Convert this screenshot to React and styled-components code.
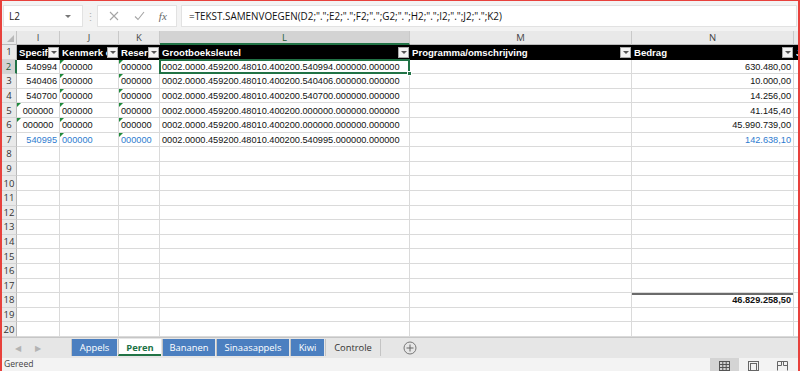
import React from 'react';
import styled, { createGlobalStyle, css } from 'styled-components';

const GlobalStyle = createGlobalStyle`
  html, body {
    margin: 0;
    padding: 0;
    overflow: hidden;
    background: #fff;
  }
  * {
    box-sizing: border-box;
  }
`;

const Frame = styled.div`
  width: 800px;
  height: 371px;
  border: 2px solid #e8413c;
  border-top-width: 1px;
  border-bottom: none;
  display: flex;
  flex-direction: column;
  overflow: hidden;
  font-family: "Open Sans", "Liberation Sans", sans-serif;
`;

/* ---------- formula bar ---------- */

const FormulaBar = styled.div`
  height: 30px;
  flex: none;
  display: flex;
  align-items: center;
  padding: 0 1px 0 1px;
  background: #f3f3f3;
`;

const NameBox = styled.div`
  width: 80px;
  height: 22px;
  background: #fff;
  border: 1px solid #e2e2e2;
  display: flex;
  align-items: center;
  justify-content: space-between;
  padding: 0 11px 0 5px;
  font-size: 10px;
  color: #222;
`;

const Caret = styled.span`
  width: 0;
  height: 0;
  border-left: 3px solid transparent;
  border-right: 3px solid transparent;
  border-top: 3px solid #777;
`;

const Grip = styled.div`
  width: 14px;
  display: flex;
  justify-content: center;
  color: #b5b5b5;
  font-size: 11px;
`;

const ButtonBox = styled.div`
  width: 80px;
  height: 22px;
  background: #fff;
  border: 1px solid #e2e2e2;
  display: flex;
  align-items: center;
  justify-content: space-around;
  padding: 0 2px 0 4px;
  color: #9a9a9a;
`;

const Fx = styled.span`
  font-family: "Liberation Serif", serif;
  font-style: italic;
  font-size: 11px;
  color: #666;
`;

const FormulaInput = styled.div`
  flex: 1;
  height: 22px;
  margin-left: 4px;
  background: #fff;
  border: 1px solid #e2e2e2;
  display: flex;
  align-items: center;
  padding-left: 7px;
  font-size: 9.9px;
  color: #111;
  white-space: nowrap;
  overflow: hidden;
`;

/* ---------- sheet ---------- */

const Sheet = styled.div`
  flex: none;
  display: grid;
  grid-template-columns: 15px 43px 59px 41px 250px 222px 162px 1fr;
  grid-template-rows: 14px repeat(20, 14.6px);
  font-family: "Liberation Sans", Arial, sans-serif;
`;

const Corner = styled.div`
  position: relative;
  background: #e9e9e9;
  border-right: 1px solid #c3c3c3;
  border-bottom: 1px solid #b9b9b9;
  &::after {
    content: '';
    position: absolute;
    right: 2px;
    bottom: 2px;
    border-left: 7px solid transparent;
    border-bottom: 7px solid #b8b8b8;
  }
`;

const ColHead = styled.div`
  background: ${(p) => (p.$active ? '#d3d3d3' : '#e9e9e9')};
  border-right: 1px solid #c9c9c9;
  border-bottom: ${(p) => (p.$active ? '2px solid #217346' : '1px solid #b9b9b9')};
  display: flex;
  align-items: center;
  justify-content: center;
  font-family: "Open Sans", sans-serif;
  font-size: 9.5px;
  color: ${(p) => (p.$active ? '#1d5e38' : '#444')};
`;

const RowHead = styled.div`
  background: ${(p) => (p.$active ? '#d3d3d3' : '#e9e9e9')};
  border-right: ${(p) => (p.$active ? '2px solid #217346' : '1px solid #b9b9b9')};
  border-bottom: 1px solid #d4d4d4;
  display: flex;
  align-items: center;
  justify-content: center;
  font-family: "Open Sans", sans-serif;
  font-size: 9.5px;
  color: ${(p) => (p.$active ? '#1d5e38' : '#333')};
  overflow: hidden;
`;

const HeadCell = styled.div`
  background: #000;
  color: #fff;
  font-weight: bold;
  font-size: 9.6px;
  display: flex;
  align-items: center;
  padding: 0 1px 0 2px;
  overflow: hidden;
`;

const HeadText = styled.span`
  flex: 1;
  min-width: 0;
  overflow: hidden;
  white-space: nowrap;
`;

const FilterButton = styled.span`
  flex: none;
  width: 11px;
  height: 11px;
  background: #f3f3f3;
  border: 1px solid #a9a9a9;
  display: flex;
  align-items: center;
  justify-content: center;
  &::after {
    content: '';
    border-left: 3px solid transparent;
    border-right: 3px solid transparent;
    border-top: 3px solid #555;
  }
`;

const Cell = styled.div`
  position: relative;
  border-right: 1px solid #dadada;
  border-bottom: 1px solid #dadada;
  display: flex;
  align-items: center;
  justify-content: ${(p) =>
    p.$align === 'right' ? 'flex-end' : p.$align === 'center' ? 'center' : 'flex-start'};
  padding: 1px 2px 0 2px;
  font-size: 9.2px;
  font-weight: ${(p) => (p.$bold ? 'bold' : 'normal')};
  color: ${(p) => (p.$blue ? '#2e7bcf' : '#111')};
  white-space: nowrap;
  overflow: visible;
  ${(p) =>
    p.$flag &&
    css`
      &::before {
        content: '';
        position: absolute;
        top: 0;
        left: 0;
        border-top: 4px solid #1f8a3c;
        border-right: 4px solid transparent;
      }
    `}
  ${(p) =>
    p.$total &&
    css`
      box-shadow: inset 0 2px 0 #6b6b6b;
    `}
  ${(p) =>
    p.$selected &&
    css`
      &::after {
        content: '';
        position: absolute;
        inset: -1px -1px -1px -1px;
        border: 2px solid #217346;
        pointer-events: none;
        z-index: 2;
      }
    `}
`;

const Handle = styled.span`
  position: absolute;
  right: -3px;
  bottom: -3px;
  width: 5px;
  height: 5px;
  background: #217346;
  border: 1px solid #fff;
  z-index: 3;
`;

/* ---------- tabs & status ---------- */

const TabBar = styled.div`
  height: 21px;
  flex: none;
  display: flex;
  align-items: center;
  background: #e6e6e6;
  border-top: 1px solid #c6c6c6;
`;

const Nav = styled.div`
  width: 69px;
  display: flex;
  padding-left: 13px;
  gap: 14px;
  color: #b3b3b3;
  font-size: 8px;
`;

const Tab = styled.div`
  flex: none;
  width: ${(p) => p.$w}px;
  height: 17px;
  margin-right: 1px;
  display: flex;
  align-items: center;
  justify-content: center;
  font-size: 9.4px;
  border-left: 1px solid #c4c4c4;
  white-space: nowrap;
  ${(p) =>
    p.$kind === 'blue' &&
    css`
      background: #4b7fc0;
      color: #fff;
    `}
  ${(p) =>
    p.$kind === 'active' &&
    css`
      background: #fff;
      color: #217346;
      font-weight: bold;
      border-bottom: 2px solid #217346;
      padding-top: 2px;
    `}
  ${(p) =>
    p.$kind === 'plain' &&
    css`
      color: #333;
      border-right: 1px solid #c4c4c4;
    `}
`;

const AddSheet = styled.div`
  margin-left: 21px;
  display: flex;
  align-items: center;
`;

const StatusBar = styled.div`
  flex: 1;
  display: flex;
  align-items: flex-start;
  justify-content: space-between;
  background: #f3f3f3;
  font-size: 8.6px;
  color: #444;
  padding-left: 2px;
  overflow: hidden;
`;

const Views = styled.div`
  display: flex;
  padding-right: 1px;
`;

const ViewButton = styled.div`
  width: 29px;
  height: 14px;
  display: flex;
  justify-content: center;
  padding-top: 3px;
  background: ${(p) => (p.$on ? '#d4d4d4' : 'transparent')};
`;

const KEY = '0002.0000.459200.48010.400200.';

const data = [
  { i: '540994', k: KEY + '540994.000000.000000', n: '630.480,00' },
  { i: '540406', k: KEY + '540406.000000.000000', n: '10.000,00' },
  { i: '540700', k: KEY + '540700.000000.000000', n: '14.256,00' },
  { i: '000000', text: true, k: KEY + '000000.000000.000000', n: '41.145,40' },
  { i: '000000', text: true, k: KEY + '000000.000000.000000', n: '45.990.739,00' },
  { i: '540995', blue: true, k: KEY + '540995.000000.000000', n: '142.638,10' },
];

const columns = ['I', 'J', 'K', 'L', 'M', 'N', ''];
const headers = ['Specificatie', 'Kenmerk code', 'Reservering', 'Grootboeksleutel', 'Programma/omschrijving', 'Bedrag'];

const tabs = [
  { name: 'Appels', kind: 'blue', w: 46 },
  { name: 'Peren', kind: 'active', w: 43 },
  { name: 'Bananen', kind: 'blue', w: 53 },
  { name: 'Sinaasappels', kind: 'blue', w: 73 },
  { name: 'Kiwi', kind: 'blue', w: 34 },
  { name: 'Controle', kind: 'plain', w: 56 },
];

const GridIcon = () => (
  <svg width="11" height="10" viewBox="0 0 11 10">
    <rect x="0.5" y="0.5" width="10" height="9" fill="none" stroke="#555" />
    <path d="M0.5 3.5H10.5M0.5 6.5H10.5M3.8 0.5V9.5M7.2 0.5V9.5" stroke="#555" />
  </svg>
);

const LayoutIcon = () => (
  <svg width="11" height="10" viewBox="0 0 11 10">
    <rect x="0.5" y="0.5" width="10" height="9" fill="none" stroke="#666" />
    <rect x="2.5" y="2.5" width="6" height="7" fill="none" stroke="#666" />
  </svg>
);

const BreakIcon = () => (
  <svg width="11" height="10" viewBox="0 0 11 10">
    <path d="M0.5 9.5V0.5H10.5V9.5M0.5 4.5H4.5V0.5M10.5 4.5H6.5V0.5" fill="none" stroke="#666" />
  </svg>
);

const App = () => {
  const body = [];
  for (let r = 2; r <= 20; r++) {
    const d = data[r - 2];
    body.push(
      <RowHead key={`h${r}`} $active={r === 2}>
        {r}
      </RowHead>
    );
    if (d) {
      body.push(
        <Cell key={`i${r}`} $align={d.text ? 'center' : 'right'} $flag={d.text} $blue={d.blue}>
          {d.i}
        </Cell>,
        <Cell key={`j${r}`} $flag $blue={d.blue}>000000</Cell>,
        <Cell key={`k${r}`} $flag $blue={d.blue}>000000</Cell>,
        <Cell key={`l${r}`} $selected={r === 2}>
          {d.k}
          {r === 2 && <Handle />}
        </Cell>,
        <Cell key={`m${r}`} />,
        <Cell key={`n${r}`} $align="right" $blue={d.blue}>{d.n}</Cell>,
        <Cell key={`x${r}`} />
      );
    } else {
      ['i', 'j', 'k', 'l', 'm'].forEach((c) => body.push(<Cell key={c + r} />));
      body.push(
        <Cell key={`n${r}`} $align="right" $bold={r === 18} $total={r === 18}>
          {r === 18 ? '46.829.258,50' : ''}
        </Cell>,
        <Cell key={`x${r}`} />
      );
    }
  }

  return (
    <>
      <GlobalStyle />
      <Frame>
        <FormulaBar>
          <NameBox>
            L2
            <Caret />
          </NameBox>
          <Grip>⋮</Grip>
          <ButtonBox>
            <svg width="10" height="10" viewBox="0 0 10 10">
              <path d="M1 1L9 9M9 1L1 9" stroke="#a5a5a5" strokeWidth="1.1" />
            </svg>
            <svg width="11" height="10" viewBox="0 0 11 10">
              <path d="M1 5.5L4 8.5L10 1" stroke="#a5a5a5" strokeWidth="1.1" fill="none" />
            </svg>
            <Fx>fx</Fx>
          </ButtonBox>
          <FormulaInput>
            =TEKST.SAMENVOEGEN(D2;".";E2;".";F2;".";G2;".";H2;".";I2;".";J2;".";K2)
          </FormulaInput>
        </FormulaBar>

        <Sheet>
          <Corner />
          {columns.map((c, idx) => (
            <ColHead key={`c${idx}`} $active={c === 'L'}>
              {c}
            </ColHead>
          ))}

          <RowHead>1</RowHead>
          {headers.map((h) => (
            <HeadCell key={h}>
              <HeadText>{h}</HeadText>
              <FilterButton />
            </HeadCell>
          ))}
          <HeadCell>
            <HeadText>Jaar</HeadText>
          </HeadCell>

          {body}
        </Sheet>

        <TabBar>
          <Nav>
            <span>◀</span>
            <span>▶</span>
          </Nav>
          {tabs.map((t) => (
            <Tab key={t.name} $kind={t.kind} $w={t.w}>
              {t.name}
            </Tab>
          ))}
          <AddSheet>
            <svg width="14" height="14" viewBox="0 0 14 14">
              <circle cx="7" cy="7" r="6" fill="none" stroke="#777" />
              <path d="M7 3.5V10.5M3.5 7H10.5" stroke="#666" />
            </svg>
          </AddSheet>
        </TabBar>

        <StatusBar>
          <span>Gereed</span>
          <Views>
            <ViewButton $on>
              <GridIcon />
            </ViewButton>
            <ViewButton>
              <LayoutIcon />
            </ViewButton>
            <ViewButton>
              <BreakIcon />
            </ViewButton>
          </Views>
        </StatusBar>
      </Frame>
    </>
  );
};

export default App;
